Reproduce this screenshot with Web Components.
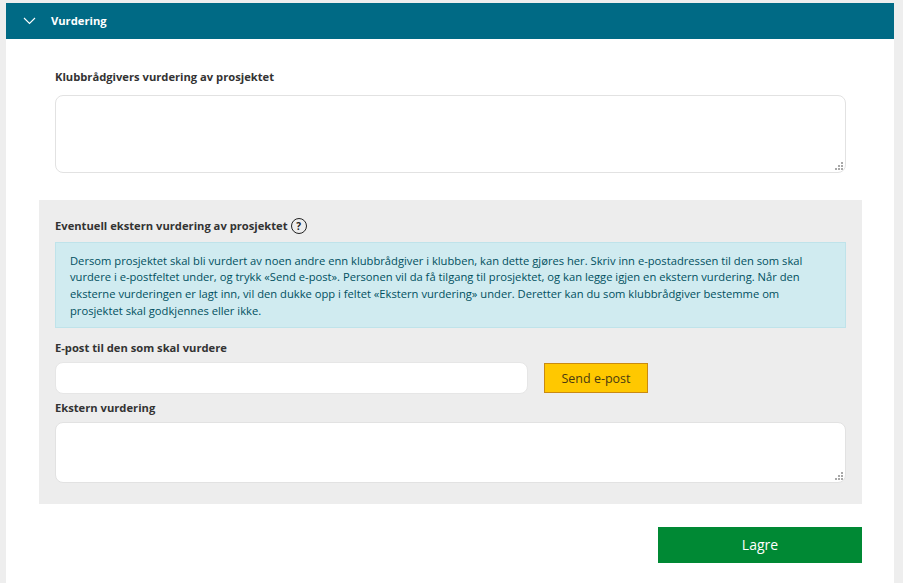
<!DOCTYPE html>
<html lang="no">
<head>
<meta charset="utf-8">
<title>Vurdering</title>
<style>
html, body { margin: 0; padding: 0; height: 583px; overflow: hidden; }
body { background: #eeeeee; font-family: "Open Sans", sans-serif; color: #333; padding: 3px 9px 0 6px; box-sizing: border-box; }
</style>
</head>
<body>
<accordion-panel heading="Vurdering">
  <field-label>Klubbrådgivers vurdering av prosjektet</field-label>
  <text-area style="--h:78px; margin: 9px 16px 27px 16px"></text-area>
  <grey-box>
    <field-label>Eventuell ekstern vurdering av prosjektet<help-icon></help-icon></field-label>
    <info-box>Dersom prosjektet skal bli vurdert av noen andre enn klubbrådgiver i klubben, kan dette gjøres her. Skriv inn e-postadressen til den som skal vurdere i e-postfeltet under, og trykk «Send e-post». Personen vil da få tilgang til prosjektet, og kan legge igjen en ekstern vurdering. Når den eksterne vurderingen er lagt inn, vil den dukke opp i feltet «Ekstern vurdering» under. Deretter kan du som klubbrådgiver bestemme om prosjektet skal godkjennes eller ikke.</info-box>
    <field-label>E-post til den som skal vurdere</field-label>
    <email-row></email-row>
    <field-label>Ekstern vurdering</field-label>
    <text-area style="--h:61px; margin-top: 5px"></text-area>
  </grey-box>
  <save-row>Lagre</save-row>
</accordion-panel>

<script>
class AccordionPanel extends HTMLElement {
    connectedCallback() {
        this.attachShadow({mode: 'open'});
        this.shadowRoot.innerHTML = `
<style>
:host { display: block; width: 888px; background: #fff; height: 580px; }
.head { display: flex; align-items: center; height: 36px; background: #006a85; color: #fff; font-size: 11.2px; font-weight: 700; line-height: 34px; padding-left: 17px; }
.head svg { width: 13px; height: 8px; margin-right: 15px; }
.head span { padding-bottom: 1px; }
.body { padding: 29px 32px 0 33px; }
</style>
<div class="head">
  <svg viewBox="0 0 13 8"><path d="M1 1l5.5 5.5L12 1" fill="none" stroke="#fff" stroke-width="1.1"/></svg>
  <span>${this.getAttribute('heading')}</span>
</div>
<div class="body"><slot></slot></div>`;
    }
}

class FieldLabel extends HTMLElement {
    connectedCallback() {
        this.attachShadow({mode: 'open'});
        this.shadowRoot.innerHTML = `
<style>
:host { display: flex; align-items: center; gap: 3px; padding-left: 16px; font-size: 11.2px; font-weight: 700; line-height: 18px; color: #333; white-space: nowrap; }
</style>
<slot></slot>`;
    }
}

class HelpIcon extends HTMLElement {
    connectedCallback() {
        this.attachShadow({mode: 'open'});
        this.shadowRoot.innerHTML = `
<style>
:host { display: inline-flex; align-items: center; justify-content: center; box-sizing: border-box; width: 16px; height: 16px; border: 1.2px solid #222; border-radius: 50%; font-size: 10px; font-weight: 700; color: #222; line-height: 1; }
</style>
?`;
    }
}

class TextArea extends HTMLElement {
    connectedCallback() {
        this.attachShadow({mode: 'open'});
        this.shadowRoot.innerHTML = `
<style>
:host { display: block; position: relative; }
textarea { display: block; box-sizing: border-box; width: 100%; height: var(--h); resize: none; background: #fff; border: 1px solid #e2e2e2; border-radius: 8px; outline: none; }
svg { position: absolute; right: 2px; bottom: 2px; width: 9px; height: 9px; }
</style>
<textarea></textarea>
<svg viewBox="0 0 9 9" fill="#a8a8a8">
  <rect x="6" y="0" width="2" height="2"/>
  <rect x="3" y="3" width="2" height="2"/><rect x="6" y="3" width="2" height="2"/>
  <rect x="0" y="6" width="2" height="2"/><rect x="3" y="6" width="2" height="2"/><rect x="6" y="6" width="2" height="2"/>
</svg>`;
    }
}

class GreyBox extends HTMLElement {
    connectedCallback() {
        this.attachShadow({mode: 'open'});
        this.shadowRoot.innerHTML = `
<style>
:host { display: block; background: #ededed; padding: 17px 16px 21px 0; }
::slotted(text-area) { margin-left: 16px; }
</style>
<slot></slot>`;
    }
}

class InfoBox extends HTMLElement {
    connectedCallback() {
        this.attachShadow({mode: 'open'});
        this.shadowRoot.innerHTML = `
<style>
:host { display: block; box-sizing: border-box; height: 86px; margin: 7px 0 11px 16px; padding: 9.7px 14px 0; background: #d0ebf0; border: 1px solid #bfe3ea; color: #00505f; font-size: 11.2px; line-height: 16.7px; }
</style>
<slot></slot>`;
    }
}

class EmailRow extends HTMLElement {
    connectedCallback() {
        this.attachShadow({mode: 'open'});
        this.shadowRoot.innerHTML = `
<style>
:host { display: flex; align-items: center; gap: 16px; margin: 5px 0 5px 16px; }
input { box-sizing: border-box; width: 473px; height: 32px; background: #fff; border: 1px solid #e6e6e6; border-radius: 8px; outline: none; }
button { box-sizing: border-box; width: 104px; height: 30px; padding: 0; background: #ffc800; border: 1px solid #c98a12; border-radius: 0; color: #4a3a10; font: 12.5px "Open Sans", sans-serif; }
</style>
<input type="email">
<button>Send e-post</button>`;
    }
}

class SaveRow extends HTMLElement {
    connectedCallback() {
        this.attachShadow({mode: 'open'});
        this.shadowRoot.innerHTML = `
<style>
:host { display: flex; justify-content: flex-end; margin-top: 23px; }
button { width: 204px; height: 36px; padding: 0 0 2px; background: #008934; border: 0; color: #fff; font: 14px "Open Sans", sans-serif; }
</style>
<button><slot></slot></button>`;
    }
}

customElements.define('accordion-panel', AccordionPanel);
customElements.define('field-label', FieldLabel);
customElements.define('help-icon', HelpIcon);
customElements.define('text-area', TextArea);
customElements.define('grey-box', GreyBox);
customElements.define('info-box', InfoBox);
customElements.define('email-row', EmailRow);
customElements.define('save-row', SaveRow);
</script>
</body>
</html>
